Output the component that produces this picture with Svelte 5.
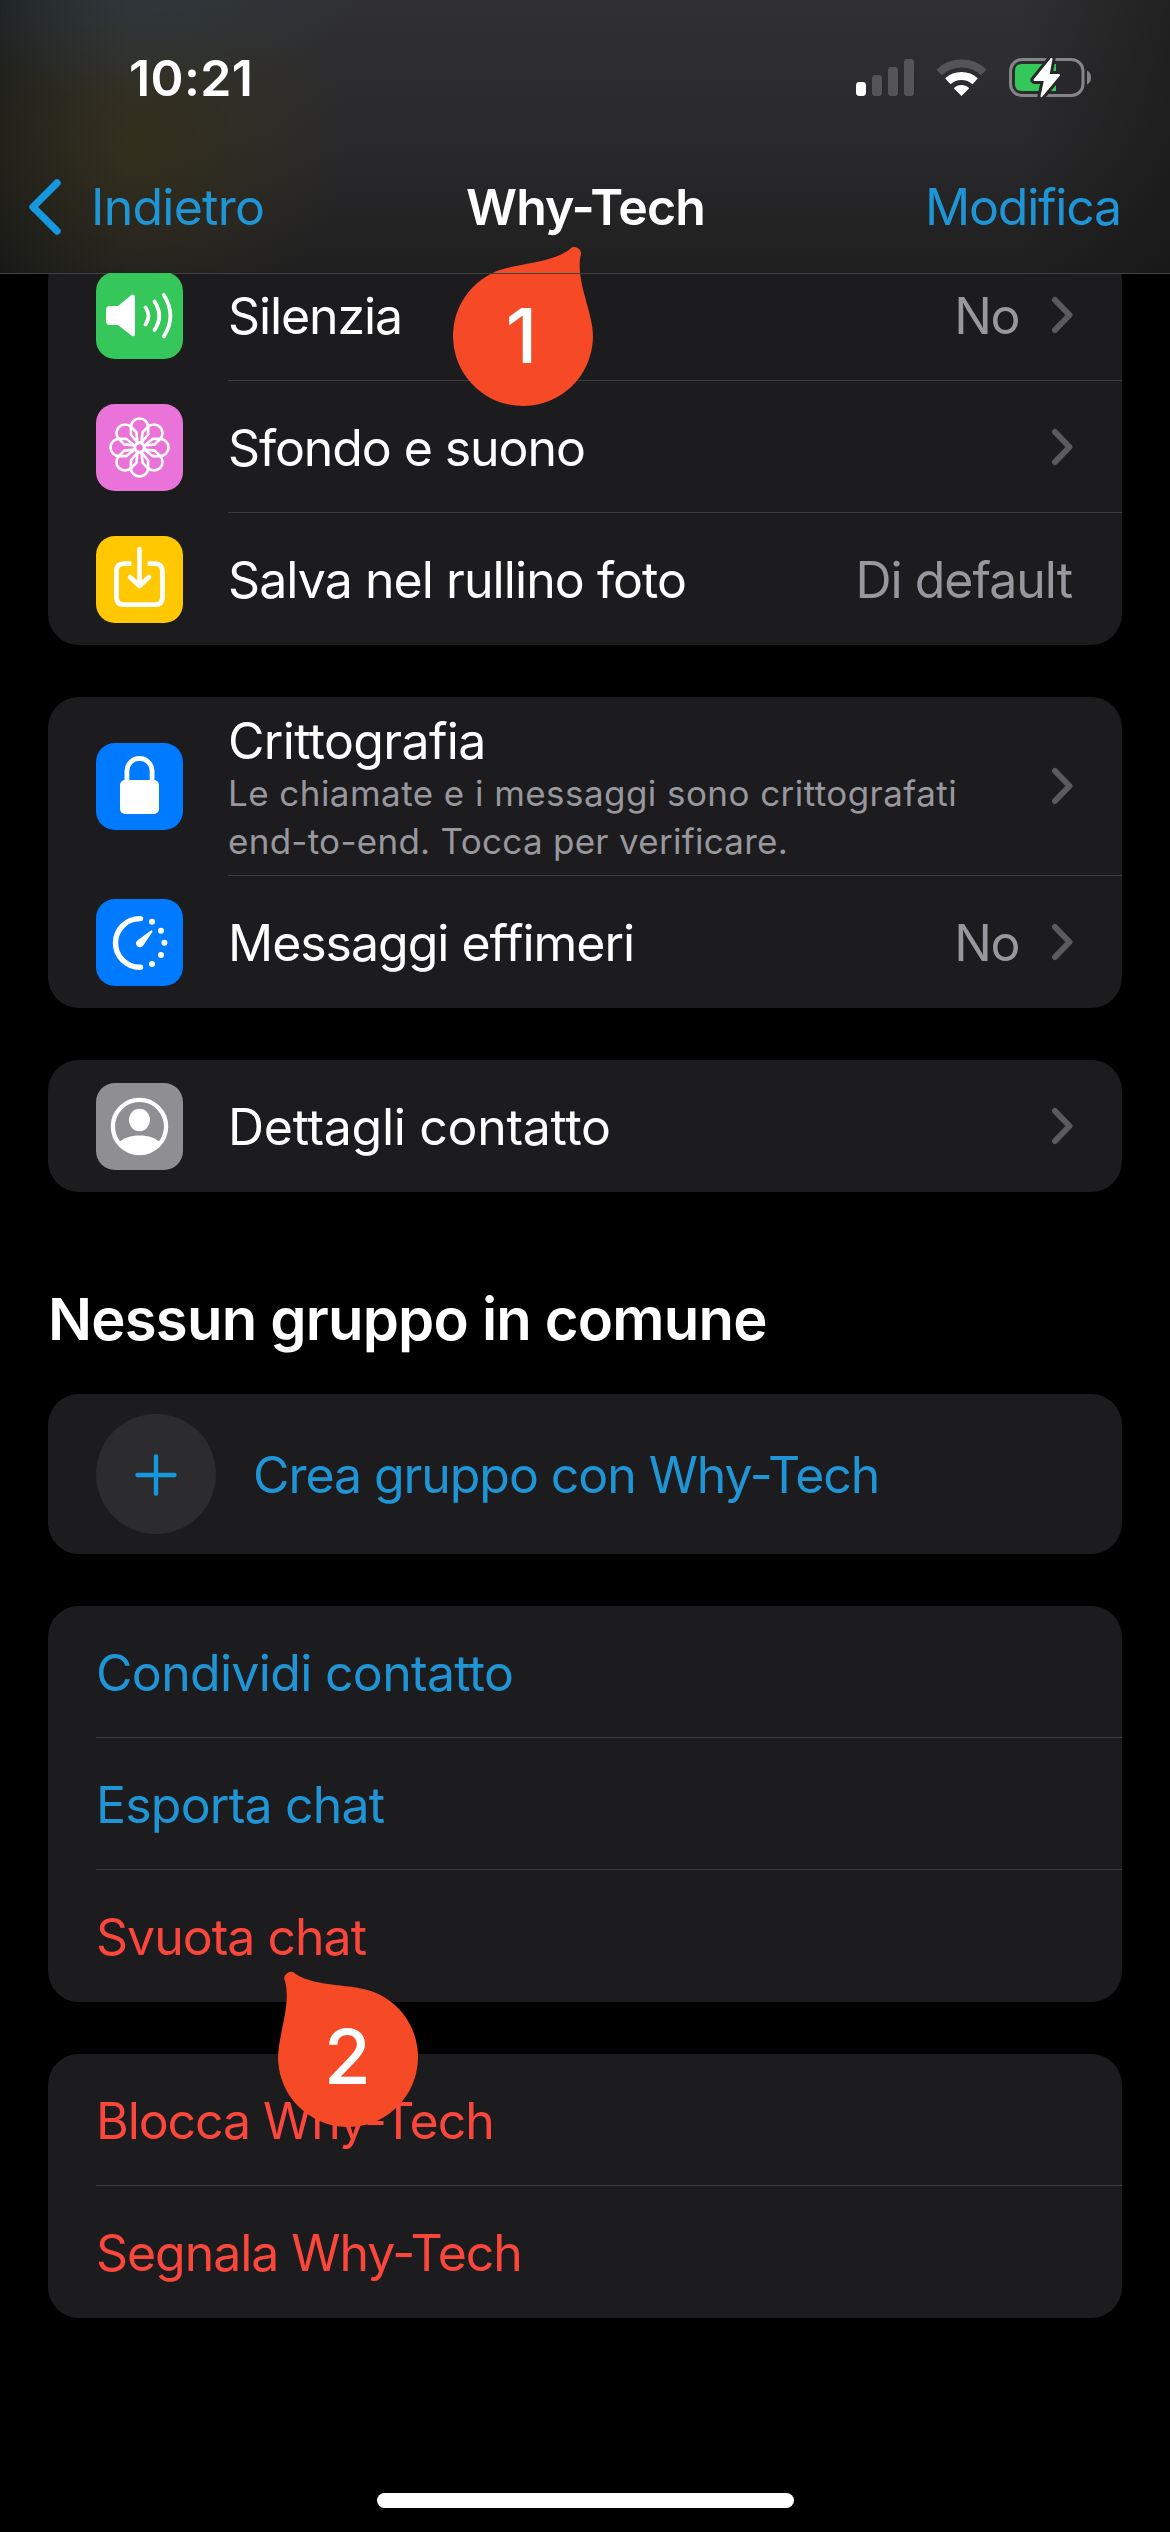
<script>
  // `track` is the letter-spacing of a label in pixels.
  const groups = [
    [
      { icon: 'sound', label: 'Silenzia', track: -1.1, value: 'No', valueTrack: -1.5, arrow: true },
      { icon: 'flower', label: 'Sfondo e suono', track: -1.08, arrow: true },
      { icon: 'save', label: 'Salva nel rullino foto', track: -0.93, value: 'Di default', valueTrack: -1 }
    ],
    [
      {
        icon: 'lock',
        label: 'Crittografia',
        track: -0.65,
        arrow: true,
        note: [
          { text: 'Le chiamate e i messaggi sono crittografati', track: 0.44 },
          { text: 'end-to-end. Tocca per verificare.', track: 0.28 }
        ]
      },
      { icon: 'timer', label: 'Messaggi effimeri', track: -1.03, value: 'No', valueTrack: -1.5, arrow: true }
    ],
    [{ icon: 'person', label: 'Dettagli contatto', track: -0.3, arrow: true }]
  ];

  const actions = [
    [
      { label: 'Condividi contatto', track: -0.68, tone: 'link' },
      { label: 'Esporta chat', track: -0.8, tone: 'link' },
      { label: 'Svuota chat', track: -1, tone: 'danger' }
    ],
    [
      { label: 'Blocca Why-Tech', track: -1.07, tone: 'danger' },
      { label: 'Segnala Why-Tech', track: -1.07, tone: 'danger' }
    ]
  ];

  const petals = [0, 45, 90, 135, 180, 225, 270, 315];
</script>

{#snippet glyph(name)}
  <svg class="tile {name}" viewBox="0 0 87 87" width="87" height="87" fill="none" stroke="#fff" stroke-linecap="round" stroke-linejoin="round">
    {#if name === 'sound'}
      <path d="M14 34H22L36 22.5Q39 22 39 25V62Q39 65 36 64L22 53H14Q10 53 10 49V38Q10 34 14 34Z" fill="#fff" stroke="none" />
      <path d="M49.5 35.5Q55.5 43.7 49.5 52.5M58.5 29.5Q68 43.7 58.5 58M67.8 23Q81 43.7 67.8 64.5" stroke-width="3.8" />
    {:else if name === 'flower'}
      <g transform="translate(43.5 43.5)" stroke-width="2.6">
        {#each petals as angle}
          <path d="M-8.6 -20.4A8.6 8.6 0 0 1 8.6 -20.4V-13L1.8 -4.6H-1.8L-8.6 -13Z" transform="rotate({angle})" />
        {/each}
        <circle r="4.8" />
      </g>
    {:else if name === 'save'}
      <path d="M43.5 13V49.5M34 41L43.5 50L53 41" stroke-width="4.6" />
      <path d="M35.3 27.7H28Q20.4 27.7 20.4 35.3V61Q20.4 68.7 28 68.7H59Q66.5 68.7 66.5 61V35.3Q66.5 27.7 59 27.7H51.7" stroke-width="4.8" stroke-linecap="butt" />
    {:else if name === 'lock'}
      <rect x="24" y="37" width="39" height="34" rx="5" fill="#fff" stroke="none" />
      <path d="M30.9 39V28A12.6 12.6 0 0 1 56.1 28V39" stroke-width="4.8" />
    {:else if name === 'timer'}
      <path d="M44.5 19.6H43.8A24.2 24.2 0 0 0 43.8 68.2H44.5" stroke-width="5.4" />
      <path d="M41.6 41.2L55 31.4Q56.8 31 56.4 32.9L47.2 46.4A3.9 3.9 0 1 1 41.6 41.2Z" fill="#fff" stroke="none" />
      <g fill="#fff" stroke="none">
        <circle cx="56" cy="22.8" r="3" /><circle cx="65" cy="31.7" r="3" /><circle cx="68.4" cy="43.8" r="3" />
        <circle cx="65" cy="56" r="3" /><circle cx="56" cy="65" r="3" />
      </g>
    {:else}
      <circle cx="43.5" cy="43.5" r="26.6" stroke-width="4.3" />
      <ellipse cx="43.5" cy="37" rx="10.5" ry="11.3" fill="#fff" stroke="none" />
      <path d="M22 60.5C31 49.9 56 49.9 65 60.5A27.5 27.5 0 0 1 22 60.5Z" fill="#fff" stroke="none" />
    {/if}
  </svg>
{/snippet}

{#snippet marker(number, place)}
  <div class="marker {place}">
    <svg class="drop" viewBox="-106 -106 212 212" width="212" height="212">
      <path d="M-59.4 -37C-47 -57 -16 -74 -6.5 -98A6.6 6.6 0 0 1 6.5 -98C16 -74 47 -57 59.4 -37A70 70 0 1 1 -59.4 -37Z" fill="#f54a25" />
    </svg>
    <span>{number}</span>
  </div>
{/snippet}

<div class="screen">
  <header>
    <div class="status">
      <time>10:21</time>
      <svg class="indicators" viewBox="856 56 236 44" width="236" height="44">
        <rect x="856" y="82" width="10" height="14" rx="3.4" fill="#fff" />
        <rect x="872" y="75" width="10" height="21" rx="3.4" fill="#555557" />
        <rect x="888" y="67" width="10" height="29" rx="3.4" fill="#555557" />
        <rect x="904" y="59" width="10" height="37" rx="3.4" fill="#555557" />
        <g fill="none" stroke-width="8">
          <path d="M939.2 72.4A32.5 32.5 0 0 1 983.8 72.4" stroke="#555557" />
          <path d="M947.8 81.2A20.5 20.5 0 0 1 975.2 81.2" stroke="#fff" />
        </g>
        <path d="M961.5 96L953.8 88.2A11 11 0 0 1 969.2 88.2Z" fill="#fff" />
        <rect x="1010.5" y="59.5" width="72.5" height="36" rx="11.5" fill="none" stroke="#858587" stroke-width="3" />
        <path d="M1022 64H1056V91H1022Q1015 91 1015 84V71Q1015 64 1022 64Z" fill="#34c759" />
        <path d="M1087 70.5Q1091 72.5 1091 77.5Q1091 82.5 1087 84.5Z" fill="#858587" />
        <path d="M1051.5 58.8L1034.5 80H1045L1041.5 96.2L1059 75H1048.5Z" fill="#fff" stroke="#28282a" stroke-width="8" stroke-linejoin="round" />
        <path d="M1051.5 58.8L1034.5 80H1045L1041.5 96.2L1059 75H1048.5Z" fill="#fff" stroke="#fff" stroke-width="2" stroke-linejoin="round" />
      </svg>
    </div>
    <nav>
      <a class="back" href="#back">
        <svg viewBox="0 0 34 58" width="34" height="58"><path d="M29 5L5 29L29 53" fill="none" stroke="#1598e0" stroke-width="7.4" stroke-linecap="round" stroke-linejoin="round" /></svg>
        <span>Indietro</span>
      </a>
      <h1>Why-Tech</h1>
      <a class="edit" href="#edit">Modifica</a>
    </nav>
  </header>

  <main>
    {#each groups as rows}
      <section class="card">
        {#each rows as row}
          <div class="row">
            {@render glyph(row.icon)}
            <div class="body" class:tall={row.note}>
              <div class="text">
                <p class="label" style:letter-spacing="{row.track}px">{row.label}</p>
                {#if row.note}
                  {#each row.note as line}
                    <p class="note" style:letter-spacing="{line.track}px">{line.text}</p>
                  {/each}
                {/if}
              </div>
              {#if row.value}
                <span class="value" style:letter-spacing="{row.valueTrack}px">{row.value}</span>
              {/if}
              {#if row.arrow}
                <svg class="arrow" viewBox="0 0 22 38" width="22" height="38"><path d="M4 4L18.5 19L4 34" fill="none" stroke="#5b5b5f" stroke-width="6" stroke-linecap="round" stroke-linejoin="round" /></svg>
              {/if}
            </div>
          </div>
        {/each}
      </section>
    {/each}

    <h2>Nessun gruppo in comune</h2>

    <section class="card create">
      <span class="plus">
        <svg viewBox="0 0 42 42" width="42" height="42"><path d="M21 2.5V39.5M2.5 21H39.5" stroke="#1598e0" stroke-width="4.4" stroke-linecap="round" /></svg>
      </span>
      <p class="link">Crea gruppo con Why-Tech</p>
    </section>

    {#each actions as rows}
      <section class="card">
        {#each rows as row}
          <div class="row plain">
            <div class="body">
              <p class={row.tone} style:letter-spacing="{row.track}px">{row.label}</p>
            </div>
          </div>
        {/each}
      </section>
    {/each}
  </main>

  <div class="home"></div>

  {@render marker(1, 'first')}
  {@render marker(2, 'second')}
</div>

<style>
  :global(body) {
    margin: 0;
    background: #000;
  }
  .screen {
    position: relative;
    display: flex;
    flex-direction: column;
    width: 1170px;
    height: 2532px;
    overflow: hidden;
    box-sizing: border-box;
    background: #000;
    color: #fff;
    font: 400 50px/60px Inter, 'Liberation Sans', sans-serif;
  }
  p, h1, h2 {
    margin: 0;
    white-space: nowrap;
  }
  a {
    color: #1f95d6;
    text-decoration: none;
  }
  header {
    height: 273px;
    flex: none;
    display: flex;
    flex-direction: column;
    background:
      radial-gradient(ellipse 220px 110px at 140px -10px, rgba(44, 62, 74, 0.5), transparent),
      radial-gradient(ellipse 210px 190px at 140px 145px, rgba(58, 52, 20, 0.6), transparent),
      linear-gradient(90deg, rgba(18, 20, 18, 0.6), transparent 130px, transparent 1020px, rgba(20, 20, 20, 0.55)),
      linear-gradient(#303032, #2a2a2c 50%, #1f1f20);
  }
  .status {
    display: flex;
    justify-content: space-between;
    align-items: flex-start;
    padding: 48px 78px 0 129px;
    height: 129px;
    box-sizing: border-box;
  }
  time {
    font-weight: 600;
    letter-spacing: 0.4px;
  }
  .indicators {
    margin-top: 8px;
  }
  nav {
    display: grid;
    grid-template-columns: 1fr auto 1fr;
    align-items: center;
    height: 60px;
    padding: 0 49px 0 28px;
    margin-top: 48px;
  }
  .back {
    display: flex;
    align-items: center;
    gap: 29px;
    letter-spacing: -0.75px;
  }
  h1 {
    font-size: 50px;
    line-height: 60px;
    font-weight: 600;
    letter-spacing: -0.9px;
    margin-left: 22px;
  }
  .edit {
    justify-self: end;
    letter-spacing: -1.2px;
  }
  main {
    position: relative;
    flex: 1;
    overflow: hidden;
    padding: 0 48px;
  }
  main::before {
    content: '';
    position: absolute;
    z-index: 1;
    inset: 0 0 auto;
    height: 1px;
    background: #414144;
  }
  .card {
    background: #1c1c1e;
    border-radius: 31px;
    margin-bottom: 52px;
    overflow: hidden;
  }
  .card:first-child {
    margin-top: -24px;
  }
  .row {
    display: flex;
    align-items: center;
    gap: 45px;
    padding-left: 48px;
  }
  .plain {
    gap: 0;
  }
  .tile {
    position: relative;
    z-index: 2;
    flex: none;
    border-radius: 19px;
  }
  .sound { background: #35c759; }
  .flower { background: #ea73d9; }
  .save { background: #ffc800; }
  .lock, .timer { background: #007aff; }
  .person { background: #8e8e93; }
  .body {
    flex: 1;
    display: flex;
    align-items: center;
    height: 132px;
    box-sizing: border-box;
    padding: 2px 50px 0 0;
    box-shadow: inset 0 -1px #3c3c3f;
  }
  .row:last-child .body {
    box-shadow: none;
  }
  .text {
    flex: 1;
  }
  .tall {
    height: 179px;
    padding-top: 0;
  }
  .tall .text {
    padding-top: 7px;
  }
  .tall .label {
    line-height: 55px;
    margin-top: -1px;
  }
  .note {
    color: #98979e;
    font-size: 35px;
    line-height: 48px;
  }
  .value {
    color: #98979e;
  }
  .arrow {
    flex: none;
    margin: -2px -1px 0 32px;
  }
  h2 {
    font-size: 58px;
    line-height: 80px;
    font-weight: 600;
    letter-spacing: -0.78px;
    margin: 87px 0 35px;
  }
  .create {
    display: flex;
    align-items: center;
    gap: 37px;
    height: 160px;
    padding-left: 48px;
    box-sizing: border-box;
  }
  .create p {
    letter-spacing: -1.07px;
    padding-top: 2px;
  }
  .plus {
    display: grid;
    place-items: center;
    width: 120px;
    height: 120px;
    padding-top: 2px;
    box-sizing: border-box;
    border-radius: 50%;
    background: #2c2c2e;
  }
  .link {
    color: #1f95d6;
  }
  .danger {
    color: #fb463c;
  }
  .home {
    width: 417px;
    height: 15px;
    flex: none;
    margin: 0 auto 24px;
    border-radius: 8px;
    background: #fff;
  }
  .marker {
    position: absolute;
    width: 212px;
    height: 212px;
    display: grid;
    place-items: center;
  }
  .first {
    left: 417px;
    top: 230px;
  }
  .second {
    left: 241.5px;
    top: 1951px;
  }
  .drop {
    grid-area: 1 / 1;
  }
  .first .drop {
    transform: rotate(32deg);
  }
  .second .drop {
    transform: rotate(-36deg);
  }
  .marker span {
    grid-area: 1 / 1;
    z-index: 1;
    font-size: 76px;
    font-weight: 500;
    line-height: 80px;
    padding-bottom: 2px;
  }
  .first span {
    padding-right: 3px;
  }
</style>
